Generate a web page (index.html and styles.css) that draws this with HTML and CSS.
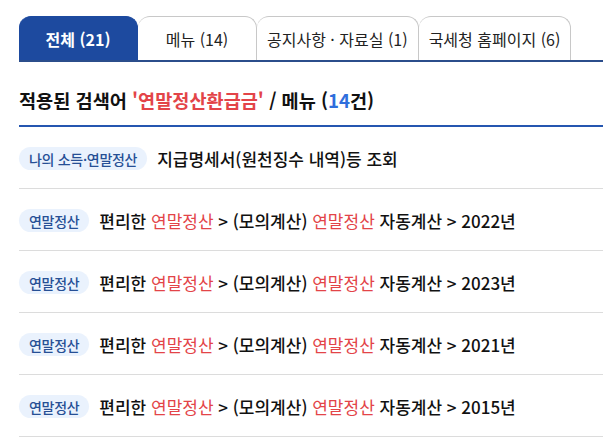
FILE: index.html
```html
<!DOCTYPE html>
<html lang="ko">
<head>
<meta charset="utf-8">
<link rel="stylesheet" href="styles.css">
</head>
<body>
<div class="page">
  <ul class="tabs">
    <li class="tab active">전체 (21)</li>
    <li class="tab">메뉴 (14)</li>
    <li class="tab">공지사항 · 자료실 (1)</li>
    <li class="tab">국세청 홈페이지 (6)</li>
  </ul>
  <h2 class="title">적용된 검색어 <span class="hl">'연말정산환급금'</span> / 메뉴 (<span class="num">14</span>건)</h2>
  <ul class="results">
    <li class="row"><span class="badge">나의 소득·연말정산</span><span class="text">지급명세서(원천징수 내역)등 조회</span></li>
    <li class="row"><span class="badge">연말정산</span><span class="text">편리한 <span class="hl">연말정산</span> &gt; (모의계산) <span class="hl">연말정산</span> 자동계산 &gt; 2022년</span></li>
    <li class="row"><span class="badge">연말정산</span><span class="text">편리한 <span class="hl">연말정산</span> &gt; (모의계산) <span class="hl">연말정산</span> 자동계산 &gt; 2023년</span></li>
    <li class="row"><span class="badge">연말정산</span><span class="text">편리한 <span class="hl">연말정산</span> &gt; (모의계산) <span class="hl">연말정산</span> 자동계산 &gt; 2021년</span></li>
    <li class="row"><span class="badge">연말정산</span><span class="text">편리한 <span class="hl">연말정산</span> &gt; (모의계산) <span class="hl">연말정산</span> 자동계산 &gt; 2015년</span></li>
  </ul>
</div>
</body>
</html>
```
FILE: styles.css
```css
html, body {
  margin: 0;
  padding: 0;
  background: #fff;
}
body {
  font-family: "Noto Sans CJK KR", "Noto Sans", sans-serif;
  color: #111;
}
.page {
  padding: 16px 0 0 19px;
}
.tabs {
  list-style: none;
  margin: 0;
  padding: 0;
  display: flex;
  border-bottom: 2px solid #2b4d8b;
}
.tab {
  box-sizing: border-box;
  height: 44px;
  min-width: 119px;
  padding: 0 10px;
  display: flex;
  align-items: center;
  justify-content: center;
  font-size: 16px;
  color: #222;
  border: 1px solid #c8c8c8;
  border-bottom: none;
  border-left: none;
  border-radius: 12px 12px 0 0;
  background: #fff;
}
.tab.active {
  background: #1d4a9f;
  border-color: #1d4a9f;
  color: #fff;
  font-weight: 700;
}
.title {
  margin: 0;
  padding: 26px 0 13px;
  font-size: 18.6px;
  line-height: 24px;
  font-weight: 700;
  color: #111;
  border-bottom: 2px solid #2556b0;
}
.title .hl {
  color: #e34448;
}
.title .num {
  color: #2f6edc;
}
.results {
  list-style: none;
  margin: 0;
  padding: 0;
}
.row {
  box-sizing: border-box;
  height: 62px;
  display: flex;
  align-items: center;
  gap: 10px;
  border-bottom: 1px solid #dcdcdc;
  padding-top: 2px;
}
.badge {
  box-sizing: border-box;
  height: 23px;
  padding: 0 10px;
  display: inline-flex;
  align-items: center;
  border-radius: 12px;
  background: #eaf2fd;
  color: #264f95;
  font-size: 14px;
  font-weight: 500;
  letter-spacing: -0.3px;
  white-space: nowrap;
}
.text {
  font-size: 17px;
  font-weight: 500;
  color: #111;
  white-space: nowrap;
}
.text .hl {
  color: #e34448;
  font-weight: 400;
}
```
